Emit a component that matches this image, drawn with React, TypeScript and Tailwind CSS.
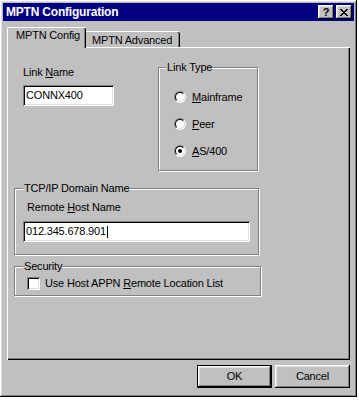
import React from "react";

const FACE = "bg-[#c0c0c0]";

function U({ children }: { children: React.ReactNode }) {
  return <span className="underline underline-offset-[1px]">{children}</span>;
}

function Radio({ checked }: { checked?: boolean }) {
  return (
    <div className="w-[12px] h-[12px] rounded-full border border-t-[#808080] border-l-[#808080] border-b-white border-r-white">
      <div className="w-full h-full rounded-full border border-t-black border-l-black border-b-[#dfdfdf] border-r-[#dfdfdf] bg-white flex items-center justify-center">
        {checked && <div className="w-[4px] h-[4px] rounded-full bg-black" />}
      </div>
    </div>
  );
}

function Group({
  label,
  className,
  legendLeft,
  children,
}: {
  label: React.ReactNode;
  className: string;
  legendLeft: string;
  children?: React.ReactNode;
}) {
  return (
    <div
      className={`relative border border-[#808080] shadow-[inset_1px_1px_#fff,1px_1px_#fff] ${className}`}
    >
      <div className={`absolute -top-[7px] ${legendLeft} px-[1px] ${FACE} leading-[13px] whitespace-nowrap`}>
        {label}
      </div>
      {children}
    </div>
  );
}

const sunken =
  "shadow-[inset_1px_1px_#808080,inset_-1px_-1px_#fff,inset_2px_2px_#000,inset_-2px_-2px_#dfdfdf]";
const raised =
  "shadow-[inset_-1px_-1px_#000,inset_1px_1px_#fff,inset_-2px_-2px_#808080,inset_2px_2px_#dfdfdf]";

export default function App() {
  return (
    <div className="font-['Liberation_Sans',Arial,sans-serif] text-[11px] leading-[13px] tracking-[-0.18px] text-black">
      <div className={`w-[357px] h-[397px] ${FACE} p-[3px] flex flex-col ${raised}`}>
        {/* Title bar */}
        <div className="h-[18px] bg-[#000080] flex items-center pl-[3px] pr-[2px]">
          <div className="text-white font-bold text-[12px] leading-[14px] flex-1 tracking-[-0.2px]">
            MPTN Configuration
          </div>
          <div className="flex gap-[2px]">
            <div className={`w-[16px] h-[14px] ${FACE} ${raised} flex items-center justify-center font-bold text-[11px] leading-[11px] pt-[1px]`}>
              ?
            </div>
            <div className={`w-[16px] h-[14px] ${FACE} ${raised} flex items-center justify-center`}>
              <svg width="8" height="7" viewBox="0 0 8 7" shapeRendering="crispEdges">
                <path d="M0 0h2v1H0zM6 0h2v1H6zM1 1h2v1H1zM5 1h2v1H5zM2 2h4v1H2zM3 3h2v1H3zM2 4h4v1H2zM1 5h2v1H1zM5 5h2v1H5zM0 6h2v1H0zM6 6h2v1H6z" fill="#000" />
              </svg>
            </div>
          </div>
        </div>

        {/* Body */}
        <div className="px-[4px] pt-[6px] flex flex-col">
          {/* Tabs */}
          <div className="h-[20px] flex items-end">
            <div className={`relative z-10 w-[79px] h-[21px] -mb-[1px] ${FACE} border-t border-l border-white rounded-tl-[2px] rounded-tr-[2px] shadow-[inset_-1px_0_#000,inset_-2px_0_#808080] pl-[8px] pt-[1px] whitespace-nowrap`}>
              MPTN Config
            </div>
            <div className={`w-[94px] h-[16px] ${FACE} border-t border-white rounded-tr-[2px] shadow-[inset_-1px_0_#000,inset_-2px_0_#808080] pl-[6px] pt-[2px] whitespace-nowrap`}>
              MPTN Advanced
            </div>
          </div>

          {/* Panel */}
          <div className={`h-[313px] ${FACE} shadow-[inset_1px_1px_#fff,inset_-1px_-1px_#000,inset_-2px_-2px_#808080] flex flex-col`}>
            <div className="mt-[19px] flex items-start">
              <div className="ml-[16px] w-[135px] flex flex-col">
                <div className="h-[13px]">
                  Link <U>N</U>ame
                </div>
                <div className={`mt-[6px] w-[91px] h-[21px] bg-white ${sunken} flex items-center pl-[3px]`}>
                  CONNX400
                </div>
              </div>
              <Group
                label="Link Type"
                legendLeft="left-[7px]"
                className="mt-[1px] w-[100px] h-[104px] pt-[23px] pl-[15px] flex flex-col gap-[15px]"
              >
                <div className="h-[12px] flex items-center gap-[6px]">
                  <Radio />
                  <span>
                    <U>M</U>ainframe
                  </span>
                </div>
                <div className="h-[12px] flex items-center gap-[6px]">
                  <Radio />
                  <span>
                    <U>P</U>eer
                  </span>
                </div>
                <div className="h-[12px] flex items-center gap-[6px]">
                  <Radio checked />
                  <span>
                    <U>A</U>S/400
                  </span>
                </div>
              </Group>
            </div>

            <Group
              label="TCP/IP Domain Name"
              legendLeft="left-[8px]"
              className="mt-[17px] ml-[7px] w-[245px] h-[67px] pt-[12px] pl-[8px] flex flex-col"
            >
              <div className="h-[13px] pl-[4px]">
                Remote <U>H</U>ost Name
              </div>
              <div className={`mt-[7px] w-[227px] h-[21px] bg-white ${sunken} flex items-center pl-[3px]`}>
                <span>012.345.678.901</span>
                <span className="ml-[1px] w-[1px] h-[12px] bg-black" />
              </div>
            </Group>

            <Group
              label="Security"
              legendLeft="left-[8px]"
              className="mt-[11px] ml-[7px] w-[247px] h-[30px] pt-[10px] pl-[12px]"
            >
              <div className="h-[13px] flex items-center gap-[5px]">
                <div className={`w-[13px] h-[13px] bg-white ${sunken}`} />
                <span className="whitespace-nowrap">
                  Use Host APPN <U>R</U>emote Location List
                </span>
              </div>
            </Group>
          </div>

          {/* Buttons */}
          <div className="mt-[5px] flex justify-end gap-[3px]">
            <div className="w-[75px] h-[23px] border border-black">
              <div className={`w-full h-full ${FACE} ${raised} flex items-center justify-center`}>OK</div>
            </div>
            <div className={`w-[75px] h-[23px] ${FACE} ${raised} flex items-center justify-center`}>Cancel</div>
          </div>
        </div>
      </div>
    </div>
  );
}
